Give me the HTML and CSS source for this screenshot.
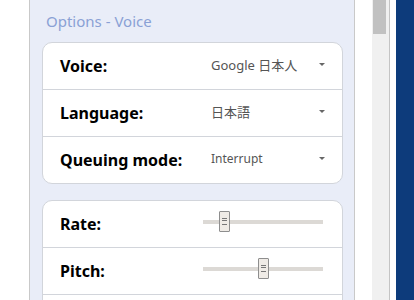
FILE: index.html
```html
<!DOCTYPE html>
<html lang="en">
<head>
    <meta charset="UTF-8">
    <meta name="viewport" content="width=device-width, initial-scale=1.0">
    <title>Options - Voice</title>
    <link rel="stylesheet" href="styles.css">
</head>
<body>
    <div class="gutter"></div>

    <div class="panel">
        <h2 class="title">Options - Voice</h2>

        <div class="card">
            <div class="row">
                <span class="label">Voice:</span>
                <div class="value"><span>Google 日本人</span><i class="arrow"></i></div>
            </div>
            <div class="row">
                <span class="label">Language:</span>
                <div class="value"><span>日本語</span><i class="arrow"></i></div>
            </div>
            <div class="row">
                <span class="label">Queuing mode:</span>
                <div class="value"><span class="small">Interrupt</span><i class="arrow"></i></div>
            </div>
        </div>

        <div class="card">
            <div class="row">
                <span class="label">Rate:</span>
                <div class="slider"><span class="thumb" style="left: 16px"></span></div>
            </div>
            <div class="row">
                <span class="label">Pitch:</span>
                <div class="slider"><span class="thumb" style="left: 55px"></span></div>
            </div>
            <div class="row">
                <span class="label"></span>
                <div class="slider"><span class="thumb" style="left: 109px"></span></div>
            </div>
        </div>
    </div>

    <div class="spacer"></div>
    <div class="scrollbar"><div class="scroll-thumb"></div></div>
    <div class="gap"></div>
    <div class="edge"></div>
</body>
</html>
```

FILE: styles.css
```css
* {
    margin: 0;
    padding: 0;
    box-sizing: border-box;
    font-family: "Noto Sans", "Noto Sans CJK JP", sans-serif;
}

body {
    height: 300px;
    display: flex;
    overflow: hidden;
    background: #fff;
}

.gutter {
    width: 29px;
}

.panel {
    width: 326px;
    background: #e9edf8;
    border-left: 1px solid #c9c9c9;
    border-right: 1px solid #c9c9c9;
    padding: 0 11px 0 12px;
}

.title {
    font-size: 15px;
    font-weight: normal;
    color: #8aa1d5;
    padding: 11px 0 0 4px;
    height: 42px;
}

.card {
    background: #fff;
    border: 1px solid #d2d5db;
    border-radius: 10px;
    margin-bottom: 16px;
}

.row {
    height: 47px;
    display: flex;
    align-items: center;
    padding: 0 17px;
    border-bottom: 1px solid #d2d5db;
}

.row:last-child {
    height: 46px;
    border-bottom: none;
}

.label {
    flex: 1;
    font-size: 16px;
    font-weight: bold;
    color: #000;
}

.value {
    width: 114px;
    display: flex;
    justify-content: space-between;
    align-items: center;
    padding-bottom: 4px;
    font-size: 13px;
    color: #555;
}

.value .small {
    font-size: 12px;
}

.arrow {
    width: 0;
    height: 0;
    border-left: 3px solid transparent;
    border-right: 3px solid transparent;
    border-top: 3px solid #666;
}

.slider {
    position: relative;
    width: 120px;
    height: 4px;
    margin: 0 2px 4px 0;
    background: #dcd9d5;
}

.thumb {
    position: absolute;
    top: -9px;
    width: 11px;
    height: 21px;
    background: #efebe6;
    border: 1px solid #8e8e8e;
    border-radius: 1px;
}

.thumb::before {
    content: "";
    position: absolute;
    left: 2px;
    top: 6px;
    width: 5px;
    height: 5px;
    border-top: 1px solid #777;
    border-bottom: 1px solid #777;
}

.thumb::after {
    content: "";
    position: absolute;
    left: 2px;
    top: 8px;
    width: 5px;
    height: 1px;
    background: #777;
}

.spacer {
    width: 17px;
}

.scrollbar {
    width: 18px;
    background: #f0f0f0;
    border-right: 1px solid #c4c4c4;
    padding: 0 3px 0 1px;
}

.scroll-thumb {
    height: 34px;
    background: #c1c1c1;
}

.gap {
    width: 6px;
}

.edge {
    flex: 1;
    background: #0d3b7b;
}
```
